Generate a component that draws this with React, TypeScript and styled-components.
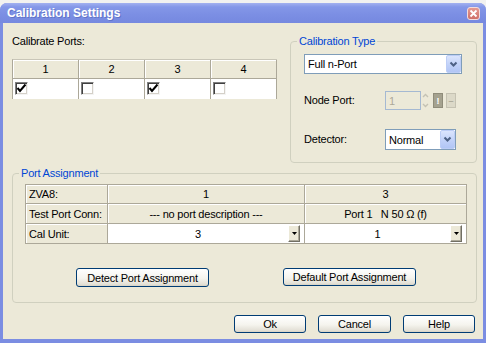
import React from 'react';
import styled, { createGlobalStyle } from 'styled-components';

const Global = createGlobalStyle`
  html, body { margin: 0; padding: 0; background: #f2f2f0; }
  body {
    font-family: "Liberation Sans", Arial, sans-serif;
    font-size: 11px;
    letter-spacing: -0.2px;
    color: #000;
  }
  * { box-sizing: border-box; }
`;

const Page = styled.div`
  width: 486px;
  height: 343px;
  padding-top: 3px;
`;

const Window = styled.div`
  width: 486px;
  height: 340px;
  display: flex;
  flex-direction: column;
  border-radius: 7px 7px 0 0;
  overflow: hidden;
  background: #7b8de2;
`;

const TitleBar = styled.div`
  height: 20px;
  flex: none;
  display: flex;
  align-items: center;
  justify-content: space-between;
  padding: 0 6px 0 7px;
  background: linear-gradient(#a3b1f0 0px, #8497e8 4px, #7b8ee3 12px, #7689df 100%);
`;

const Title = styled.span`
  font-weight: bold;
  font-size: 12px;
  letter-spacing: 0;
  color: #fff;
  text-shadow: 1px 1px 0 #6274c8;
`;

const CloseButton = styled.div`
  width: 13px;
  height: 13px;
  border: 1px solid #f3dcdc;
  border-radius: 3px;
  background: linear-gradient(#e59a92, #cf6f68);
  display: flex;
  align-items: center;
  justify-content: center;
`;

const Body = styled.div`
  flex: 1;
  margin: 0 3px 4px 3px;
  background: #ece9d8;
  display: flex;
  flex-direction: column;
`;

const TopRow = styled.div`
  display: flex;
  gap: 12px;
  padding: 12px 6px 0 9px;
`;

const SectionRow = styled.div`
  display: flex;
  padding: 4px 6px 0 9px;
`;

const LeftColumn = styled.div`
  width: 266px;
  display: flex;
  flex-direction: column;
`;

const Label = styled.div<{ $width?: number }>`
  line-height: 13px;
  width: ${(p) => (p.$width ? `${p.$width}px` : 'auto')};
  flex: none;
`;

const PortsGrid = styled.div`
  margin-top: 11px;
  display: grid;
  grid-template-columns: repeat(4, 66px);
  grid-template-rows: 19px 20px;
  width: 265px;
  border-left: 1px solid #aca899;
  border-top: 1px solid #c9c6b8;
`;

const HeaderCell = styled.div`
  background: #ece9d8;
  border-right: 1px solid #aca899;
  border-bottom: 1px solid #aca899;
  box-shadow: inset 1px 1px 0 #fff;
  display: flex;
  align-items: center;
  justify-content: center;
`;

const CheckCell = styled.div`
  background: #fff;
  border-right: 1px solid #aca899;
  padding: 3px 2px;
`;

const CheckBox = styled.div`
  width: 13px;
  height: 13px;
  background: #fff;
  border: 1px solid;
  border-color: #808080 #f4f4f4 #f4f4f4 #808080;
  box-shadow: inset 1px 1px 0 #404040, inset -1px -1px 0 #d4d0c8;
  display: flex;
  align-items: center;
  justify-content: center;
`;

const Group = styled.fieldset<{ $width: number }>`
  margin: 0;
  padding: 0;
  min-width: 0;
  width: ${(p) => p.$width}px;
  border: 1px solid #d0d0bf;
  border-radius: 4px;
`;

const Legend = styled.legend`
  margin-left: 6px;
  padding: 0 2px;
  line-height: 13px;
  font-size: 11px;
  color: #0046d5;
`;

const TypeContent = styled.div`
  padding: 6px 13px 12px 13px;
  display: flex;
  flex-direction: column;
`;

const Combo = styled.div<{ $width: number; $height: number }>`
  width: ${(p) => p.$width}px;
  height: ${(p) => p.$height}px;
  background: #fff;
  border: 1px solid #7f9db9;
  display: flex;
  align-items: center;
  justify-content: space-between;
  padding-left: 3px;
`;

const ComboButton = styled.div`
  width: 15px;
  align-self: stretch;
  border: 1px solid #bccdf6;
  border-radius: 2px;
  background: linear-gradient(#dbe5fd, #bfd0f8 60%, #b1c5f5);
  display: flex;
  align-items: center;
  justify-content: center;
`;

const FieldRow = styled.div<{ $top: number; $height: number }>`
  margin-top: ${(p) => p.$top}px;
  height: ${(p) => p.$height}px;
  display: flex;
  align-items: center;
`;

const DisabledInput = styled.div`
  width: 36px;
  height: 19px;
  border: 1px solid #a5b9d2;
  background: #ece9d8;
  color: #aca899;
  padding-left: 3px;
  display: flex;
  align-items: center;
`;

const Spinner = styled.div`
  width: 9px;
  height: 19px;
  display: flex;
  flex-direction: column;
  align-items: center;
  justify-content: space-around;
`;

const TinyButton = styled.div<{ $dark?: boolean }>`
  width: 10px;
  height: 15px;
  margin-left: 3px;
  background: ${(p) => (p.$dark ? '#a5a28f' : '#dcd9c8')};
  border: 1px solid ${(p) => (p.$dark ? '#8f8c7a' : '#c5c2b2')};
  display: flex;
  align-items: center;
  justify-content: center;
  font-size: 9px;
  font-weight: bold;
  color: ${(p) => (p.$dark ? '#fff' : '#b0ad9c')};
`;

const AssignContent = styled.div`
  padding: 4px 9px 15px 12px;
  display: flex;
  flex-direction: column;
`;

const AssignTable = styled.div`
  display: grid;
  grid-template-columns: 82px 197px 162px;
  grid-template-rows: 19px 20px 20px;
  width: 442px;
  border-left: 1px solid #aca899;
  border-top: 1px solid #aca899;
`;

const TableCell = styled.div<{ $white?: boolean; $label?: boolean }>`
  background: ${(p) => (p.$white ? '#fff' : '#ece9d8')};
  border-right: 1px solid #aca899;
  border-bottom: 1px solid #aca899;
  box-shadow: ${(p) => (p.$white ? 'none' : 'inset 1px 1px 0 #fff')};
  display: flex;
  align-items: center;
  justify-content: ${(p) => (p.$label ? 'flex-start' : 'center')};
  padding-left: ${(p) => (p.$label ? 3 : 0)}px;
  white-space: nowrap;
`;

const CellValue = styled.span`
  flex: 1;
  text-align: center;
`;

const CellDrop = styled.div`
  width: 12px;
  height: 17px;
  margin-right: 4px;
  background: #ece9d8;
  border: 1px solid;
  border-color: #fff #716f64 #716f64 #fff;
  box-shadow: inset -1px -1px 0 #aca899;
  display: flex;
  align-items: center;
  justify-content: center;
`;

const AssignButtons = styled.div`
  display: flex;
  gap: 74px;
  padding-left: 51px;
  margin-top: 24px;
`;

const XPButton = styled.button<{ $width: number; $height?: number }>`
  width: ${(p) => p.$width}px;
  height: ${(p) => p.$height ?? 18}px;
  padding: 0;
  border: 1px solid #003c74;
  border-radius: 3px;
  background: linear-gradient(#ffffff, #f5f4ee 55%, #e3e0d6 90%, #d6d2c4);
  font-family: "Liberation Sans", Arial, sans-serif;
  font-size: 11px;
  letter-spacing: -0.2px;
  color: #000;
`;

const BottomRow = styled.div`
  display: flex;
  justify-content: flex-end;
  gap: 12px;
  padding: 12px 8px 0 0;
`;

const Check = () => (
  <svg width="11" height="11" viewBox="0 0 11 11">
    <polyline points="1.5,5 4,8 9.5,1.5" fill="none" stroke="#000" strokeWidth="2" />
  </svg>
);

const Chevron = () => (
  <svg width="9" height="7" viewBox="0 0 9 7">
    <polyline points="1.5,1.5 4.5,4.5 7.5,1.5" fill="none" stroke="#4d6185" strokeWidth="2" />
  </svg>
);

const SmallTriangle = () => (
  <svg width="5" height="3" viewBox="0 0 5 3">
    <polygon points="0,0 5,0 2.5,3" fill="#000" />
  </svg>
);

const Arrow = ({ up }: { up?: boolean }) => (
  <svg width="7" height="5" viewBox="0 0 7 5">
    <polyline
      points={up ? '1,4 3.5,1.5 6,4' : '1,1 3.5,3.5 6,1'}
      fill="none"
      stroke="#c4c2b4"
      strokeWidth="1.4"
    />
  </svg>
);

const ports = [
  { n: '1', checked: true },
  { n: '2', checked: false },
  { n: '3', checked: true },
  { n: '4', checked: false },
];

export default function App() {
  return (
    <Page>
      <Global />
      <Window>
        <TitleBar>
          <Title>Calibration Settings</Title>
          <CloseButton>
            <svg width="9" height="9" viewBox="0 0 9 9">
              <path d="M1.5 1.5 L7.5 7.5 M7.5 1.5 L1.5 7.5" stroke="#fff" strokeWidth="1.8" />
            </svg>
          </CloseButton>
        </TitleBar>
        <Body>
          <TopRow>
            <LeftColumn>
              <Label>Calibrate Ports:</Label>
              <PortsGrid>
                {ports.map((p) => (
                  <HeaderCell key={`h${p.n}`}>{p.n}</HeaderCell>
                ))}
                {ports.map((p) => (
                  <CheckCell key={`c${p.n}`}>
                    <CheckBox>{p.checked && <Check />}</CheckBox>
                  </CheckCell>
                ))}
              </PortsGrid>
            </LeftColumn>
            <Group $width={187}>
              <Legend>Calibration Type</Legend>
              <TypeContent>
                <Combo $width={158} $height={20}>
                  <span>Full n-Port</span>
                  <ComboButton>
                    <Chevron />
                  </ComboButton>
                </Combo>
                <FieldRow $top={17} $height={19}>
                  <Label $width={81}>Node Port:</Label>
                  <DisabledInput>1</DisabledInput>
                  <Spinner>
                    <Arrow up />
                    <Arrow />
                  </Spinner>
                  <TinyButton $dark>!</TinyButton>
                  <TinyButton>–</TinyButton>
                </FieldRow>
                <FieldRow $top={19} $height={21}>
                  <Label $width={81}>Detector:</Label>
                  <Combo $width={71} $height={21}>
                    <span>Normal</span>
                    <ComboButton>
                      <Chevron />
                    </ComboButton>
                  </Combo>
                </FieldRow>
              </TypeContent>
            </Group>
          </TopRow>
          <SectionRow>
            <Group $width={465}>
              <Legend>Port Assignment</Legend>
              <AssignContent>
                <AssignTable>
                  <TableCell $label>ZVA8:</TableCell>
                  <TableCell>1</TableCell>
                  <TableCell>3</TableCell>
                  <TableCell $label>Test Port Conn:</TableCell>
                  <TableCell>--- no port description ---</TableCell>
                  <TableCell>Port 1&nbsp;&nbsp; N 50 Ω (f)</TableCell>
                  <TableCell $label>Cal Unit:</TableCell>
                  <TableCell $white>
                    <CellValue>3</CellValue>
                    <CellDrop>
                      <SmallTriangle />
                    </CellDrop>
                  </TableCell>
                  <TableCell $white>
                    <CellValue>1</CellValue>
                    <CellDrop>
                      <SmallTriangle />
                    </CellDrop>
                  </TableCell>
                </AssignTable>
                <AssignButtons>
                  <XPButton $width={133} $height={19}>Detect Port Assignment</XPButton>
                  <XPButton $width={133}>Default Port Assignment</XPButton>
                </AssignButtons>
              </AssignContent>
            </Group>
          </SectionRow>
          <BottomRow>
            <XPButton $width={72}>Ok</XPButton>
            <XPButton $width={73}>Cancel</XPButton>
            <XPButton $width={72}>Help</XPButton>
          </BottomRow>
        </Body>
      </Window>
    </Page>
  );
}
